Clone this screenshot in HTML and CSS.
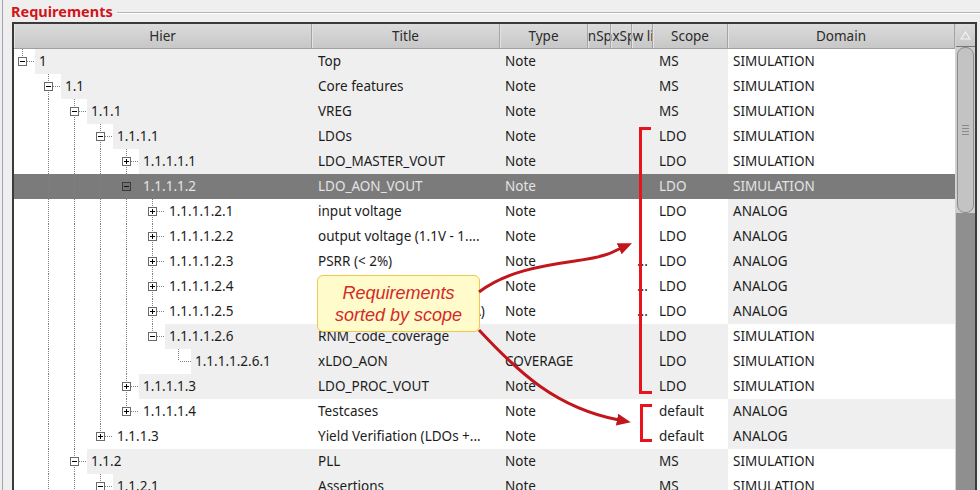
FILE: index.html
```html
<!DOCTYPE html>
<html>
<head>
<meta charset="utf-8">
<link rel="stylesheet" href="styles.css">
</head>
<body>
<div class="page">
  <div class="gtitle"><h1>Requirements</h1><span class="gline"></span></div>
  <div class="table">
    <div class="main">
      <div class="head cols">
        <div class="hc">Hier</div>
        <div class="hc">Title</div>
        <div class="hc">Type</div>
        <div class="hc">MinSpec</div>
        <div class="hc">MaxSpec</div>
        <div class="hc">Low lim</div>
        <div class="hc">Scope</div>
        <div class="hc">Domain</div>
      </div>
      <div class="body">
        <div class="row cols g">
          <div class="hier"><span class="own"><i class="bx mi"></i></span><span class="lbl">1</span></div>
          <div class="title">Top</div><div class="type">Note</div><div></div><div></div><div class="s3"></div><div class="scope">MS</div><div class="dom">SIMULATION</div>
        </div>
        <div class="row cols g">
          <div class="hier"><span class="sl"></span><span class="own more"><i class="bx mi"></i></span><span class="lbl">1.1</span></div>
          <div class="title">Core features</div><div class="type">Note</div><div></div><div></div><div class="s3"></div><div class="scope">MS</div><div class="dom">SIMULATION</div>
        </div>
        <div class="row cols g">
          <div class="hier"><span class="sl"></span><span class="sl p"></span><span class="own more"><i class="bx mi"></i></span><span class="lbl">1.1.1</span></div>
          <div class="title">VREG</div><div class="type">Note</div><div></div><div></div><div class="s3"></div><div class="scope">MS</div><div class="dom">SIMULATION</div>
        </div>
        <div class="row cols g">
          <div class="hier"><span class="sl"></span><span class="sl p"></span><span class="sl p"></span><span class="own more"><i class="bx mi"></i></span><span class="lbl">1.1.1.1</span></div>
          <div class="title">LDOs</div><div class="type">Note</div><div></div><div></div><div class="s3"></div><div class="scope">LDO</div><div class="dom">SIMULATION</div>
        </div>
        <div class="row cols g">
          <div class="hier"><span class="sl"></span><span class="sl p"></span><span class="sl p"></span><span class="sl p"></span><span class="own more"><i class="bx pl"></i></span><span class="lbl">1.1.1.1.1</span></div>
          <div class="title">LDO_MASTER_VOUT</div><div class="type">Note</div><div></div><div></div><div class="s3"></div><div class="scope">LDO</div><div class="dom">SIMULATION</div>
        </div>
        <div class="row cols sel">
          <div class="hier"><span class="sl"></span><span class="sl p"></span><span class="sl p"></span><span class="sl p"></span><span class="own more"><i class="bx mi"></i></span><span class="lbl">1.1.1.1.2</span></div>
          <div class="title">LDO_AON_VOUT</div><div class="type">Note</div><div></div><div></div><div class="s3"></div><div class="scope">LDO</div><div class="dom">SIMULATION</div>
        </div>
        <div class="row cols w">
          <div class="hier"><span class="sl"></span><span class="sl p"></span><span class="sl p"></span><span class="sl p"></span><span class="sl p"></span><span class="own more"><i class="bx pl"></i></span><span class="lbl">1.1.1.1.2.1</span></div>
          <div class="title">input voltage</div><div class="type">Note</div><div></div><div></div><div class="s3"></div><div class="scope">LDO</div><div class="dom">ANALOG</div>
        </div>
        <div class="row cols w">
          <div class="hier"><span class="sl"></span><span class="sl p"></span><span class="sl p"></span><span class="sl p"></span><span class="sl p"></span><span class="own more"><i class="bx pl"></i></span><span class="lbl">1.1.1.1.2.2</span></div>
          <div class="title">output voltage (1.1V - 1....</div><div class="type">Note</div><div></div><div></div><div class="s3"></div><div class="scope">LDO</div><div class="dom">ANALOG</div>
        </div>
        <div class="row cols w">
          <div class="hier"><span class="sl"></span><span class="sl p"></span><span class="sl p"></span><span class="sl p"></span><span class="sl p"></span><span class="own more"><i class="bx pl"></i></span><span class="lbl">1.1.1.1.2.3</span></div>
          <div class="title">PSRR (&lt; 2%)</div><div class="type">Note</div><div></div><div></div><div class="s3">...</div><div class="scope">LDO</div><div class="dom">ANALOG</div>
        </div>
        <div class="row cols w">
          <div class="hier"><span class="sl"></span><span class="sl p"></span><span class="sl p"></span><span class="sl p"></span><span class="sl p"></span><span class="own more"><i class="bx pl"></i></span><span class="lbl">1.1.1.1.2.4</span></div>
          <div class="title">line regulation</div><div class="type">Note</div><div></div><div></div><div class="s3">...</div><div class="scope">LDO</div><div class="dom">ANALOG</div>
        </div>
        <div class="row cols w">
          <div class="hier"><span class="sl"></span><span class="sl p"></span><span class="sl p"></span><span class="sl p"></span><span class="sl p"></span><span class="own more"><i class="bx pl"></i></span><span class="lbl">1.1.1.1.2.5</span></div>
          <div class="title">quiescent current (&lt; 10uA)</div><div class="type">Note</div><div></div><div></div><div class="s3">...</div><div class="scope">LDO</div><div class="dom">ANALOG</div>
        </div>
        <div class="row cols g">
          <div class="hier"><span class="sl"></span><span class="sl p"></span><span class="sl p"></span><span class="sl p"></span><span class="sl p"></span><span class="own"><i class="bx mi"></i></span><span class="lbl">1.1.1.1.2.6</span></div>
          <div class="title">RNM_code_coverage</div><div class="type">Note</div><div></div><div></div><div class="s3"></div><div class="scope">LDO</div><div class="dom">SIMULATION</div>
        </div>
        <div class="row cols g">
          <div class="hier"><span class="sl"></span><span class="sl p"></span><span class="sl p"></span><span class="sl p"></span><span class="sl p"></span><span class="sl"></span><span class="own leaf"></span><span class="lbl">1.1.1.1.2.6.1</span></div>
          <div class="title">xLDO_AON</div><div class="type">COVERAGE</div><div></div><div></div><div class="s3"></div><div class="scope">LDO</div><div class="dom">SIMULATION</div>
        </div>
        <div class="row cols g">
          <div class="hier"><span class="sl"></span><span class="sl p"></span><span class="sl p"></span><span class="sl p"></span><span class="own more"><i class="bx pl"></i></span><span class="lbl">1.1.1.1.3</span></div>
          <div class="title">LDO_PROC_VOUT</div><div class="type">Note</div><div></div><div></div><div class="s3"></div><div class="scope">LDO</div><div class="dom">SIMULATION</div>
        </div>
        <div class="row cols w">
          <div class="hier"><span class="sl"></span><span class="sl p"></span><span class="sl p"></span><span class="sl p"></span><span class="own"><i class="bx pl"></i></span><span class="lbl">1.1.1.1.4</span></div>
          <div class="title">Testcases</div><div class="type">Note</div><div></div><div></div><div class="s3"></div><div class="scope">default</div><div class="dom">ANALOG</div>
        </div>
        <div class="row cols w">
          <div class="hier"><span class="sl"></span><span class="sl p"></span><span class="sl p"></span><span class="own"><i class="bx pl"></i></span><span class="lbl">1.1.1.3</span></div>
          <div class="title">Yield Verifiation (LDOs +...</div><div class="type">Note</div><div></div><div></div><div class="s3"></div><div class="scope">default</div><div class="dom">ANALOG</div>
        </div>
        <div class="row cols g">
          <div class="hier"><span class="sl"></span><span class="sl p"></span><span class="own more"><i class="bx mi"></i></span><span class="lbl">1.1.2</span></div>
          <div class="title">PLL</div><div class="type">Note</div><div></div><div></div><div class="s3"></div><div class="scope">MS</div><div class="dom">SIMULATION</div>
        </div>
        <div class="row cols g">
          <div class="hier"><span class="sl"></span><span class="sl p"></span><span class="sl p"></span><span class="own more"><i class="bx mi"></i></span><span class="lbl">1.1.2.1</span></div>
          <div class="title">Assertions</div><div class="type">Note</div><div></div><div></div><div class="s3"></div><div class="scope">MS</div><div class="dom">SIMULATION</div>
        </div>
      </div>
    </div>
    <div class="sb">
      <div class="sb-btn"><svg width="11" height="9" viewBox="0 0 11 9"><path d="M5.5 1 L10 8 L1 8 Z" fill="none" stroke="#f4f4f4" stroke-width="1.2"/></svg></div>
      <div class="sb-thumb"><span class="grip"></span></div>
      <div class="sb-track"></div>
    </div>
  </div>
</div>

<div class="callout">Requirements<br>sorted by scope</div>
<svg class="ov" width="980" height="490" viewBox="0 0 980 490">
  <defs>
    <marker id="ah" markerWidth="14" markerHeight="12" refX="2" refY="6" orient="auto" markerUnits="userSpaceOnUse">
      <path d="M0,0 L14,6 L0,12 z" fill="#c0161c"/>
    </marker>
  </defs>
  <path d="M479 292 C 505 272, 540 266, 575 261 S 612 252, 621 248" stroke="#c0161c" stroke-width="3" fill="none" marker-end="url(#ah)"/>
  <path d="M479 330 C 518 372, 556 408, 619 420" stroke="#c0161c" stroke-width="3" fill="none" marker-end="url(#ah)"/>
  <path d="M651 128.5 H640.5 V392.5 H652" stroke="#e8141c" stroke-width="3" fill="none"/>
  <path d="M652 405.5 H641.5 V440.5 H652" stroke="#e8141c" stroke-width="3" fill="none"/>
</svg>
</body>
</html>
```

FILE: styles.css
```css
:root {
  --g: #efefef;
  --vdot: repeating-linear-gradient(to bottom, #808080 0 1px, transparent 1px 2px);
  --hdot: repeating-linear-gradient(to right, #808080 0 1px, transparent 1px 2px);
}

* { box-sizing: border-box; }

body {
  margin: 0;
  width: 980px;
  height: 490px;
  overflow: hidden;
  position: relative;
  background: #efefef;
  font-family: "Noto Sans", sans-serif;
  font-size: 13.5px;
  color: #1c1c1c;
}

.page {
  height: 490px;
  margin-left: 2px;
  border-left: 1px solid #a3a3b3;
  overflow: hidden;
}

.gtitle {
  height: 22px;
  display: flex;
  align-items: center;
  padding-left: 8px;
}

.gtitle h1 {
  margin: 0;
  font-size: 14.5px;
  font-weight: 700;
  line-height: 22px;
  color: #d0151b;
}

.gline {
  flex: 1;
  height: 2px;
  margin-left: 4px;
  margin-top: 3px;
  border-top: 1px solid #b4b4b4;
  border-bottom: 1px solid #ffffff;
}

.table {
  margin-left: 9px;
  width: 965px;
  height: 468px;
  display: flex;
  background: #ffffff;
  border: 2px solid #3a3a3a;
  border-bottom: none;
}

.main {
  width: 941px;
  overflow: hidden;
}

.cols {
  display: grid;
  grid-template-columns: 298px 188px 88px 23px 21px 21px 75px 227px;
}

.head {
  height: 25px;
  border-bottom: 1px solid #a0a0a0;
  background: linear-gradient(#dbdbdb, #c7c7c7);
}

.hc {
  display: flex;
  justify-content: center;
  align-items: center;
  overflow: hidden;
  white-space: nowrap;
  color: #2b2b2b;
  border-right: 1px solid #a4a4a4;
  box-shadow: inset 1px 0 #e4e4e4;
}

.row {
  height: 25px;
  line-height: 25px;
  white-space: nowrap;
}

.row > div { overflow: hidden; }

.row.g { background: var(--g); }
.row.w { background: #ffffff; }
.row .hier { background: #ffffff; display: flex; height: 25px; }
.row.g .lbl { background: var(--g); }
.row.g .dom { background: #ffffff; }
.row.w .dom { background: var(--g); }

.row.sel { background: #7b7b7b; color: #e4e4e4; }
.row.sel .hier, .row.sel .lbl, .row.sel .dom { background: transparent; }

.sl {
  flex: none;
  width: 26px;
  height: 25px;
}

.sl.p {
  background: var(--vdot) 8px 0 / 1px 100% no-repeat;
}

.own {
  flex: none;
  width: 21px;
  height: 25px;
  display: flex;
  align-items: center;
  background:
    var(--vdot) 8px 0 / 1px 12px no-repeat,
    var(--hdot) 13px 12px / 8px 1px no-repeat;
}

.own.more {
  background:
    var(--vdot) 8px 0 / 1px 100% no-repeat,
    var(--hdot) 13px 12px / 8px 1px no-repeat;
}

.own.leaf {
  background:
    var(--vdot) 8px 0 / 1px 12px no-repeat,
    var(--hdot) 10px 12px / 11px 1px no-repeat;
}

.bx {
  display: block;
  width: 9px;
  height: 9px;
  margin-left: 4px;
  border: 1px solid #6a6a6a;
}

.bx.mi {
  background: linear-gradient(#000, #000) 1px 3px / 5px 1px no-repeat, #ffffff;
}

.bx.pl {
  background:
    linear-gradient(#000, #000) 1px 3px / 5px 1px no-repeat,
    linear-gradient(#000, #000) 3px 1px / 1px 5px no-repeat,
    #ffffff;
}

.row.sel .bx { border-color: #3a3a3a; }
.row.sel .bx.mi {
  background: linear-gradient(#111, #111) 1px 3px / 5px 1px no-repeat, #727272;
}

.lbl {
  flex: 1;
  padding-left: 4px;
  overflow: hidden;
}

.title { padding-left: 6px; }
.type { padding-left: 5px; }
.s3 { padding-left: 5px; }
.scope { padding-left: 6px; }
.dom { padding-left: 5px; }

.sb {
  width: 20px;
  display: flex;
  flex-direction: column;
  border-left: 1px solid #d2d2d2;
  background: linear-gradient(#cdcdcd 0 190px, #8f8f8f 190px);
}

.sb-btn {
  height: 23px;
  flex: none;
  display: flex;
  align-items: center;
  justify-content: center;
  background: linear-gradient(#dbdbdb, #c7c7c7);
  border-bottom: 1px solid #777777;
}

.sb-btn svg { display: block; }

.sb-thumb {
  flex: none;
  height: 166px;
  margin: 0 1px;
  display: flex;
  align-items: center;
  justify-content: center;
  background: #c3c3c3;
  border: 1px solid #8c8c8c;
  border-radius: 8px;
}

.grip {
  width: 7px;
  height: 10px;
  background: repeating-linear-gradient(to bottom, #8a8a8a 0 1px, transparent 1px 3px);
}

.sb-track {
  flex: 1;
  background: #8f8f8f;
}

.callout {
  position: absolute;
  left: 317px;
  top: 275px;
  width: 163px;
  height: 57px;
  display: flex;
  align-items: center;
  justify-content: center;
  text-align: center;
  font-family: "Liberation Sans", Arial, sans-serif;
  font-style: italic;
  font-size: 18px;
  line-height: 22px;
  color: #d42a2a;
  background: #fffbcb;
  border: 1px solid #f0c64c;
  border-radius: 6px;
}

.ov {
  position: absolute;
  left: 0;
  top: 0;
  pointer-events: none;
}
```
